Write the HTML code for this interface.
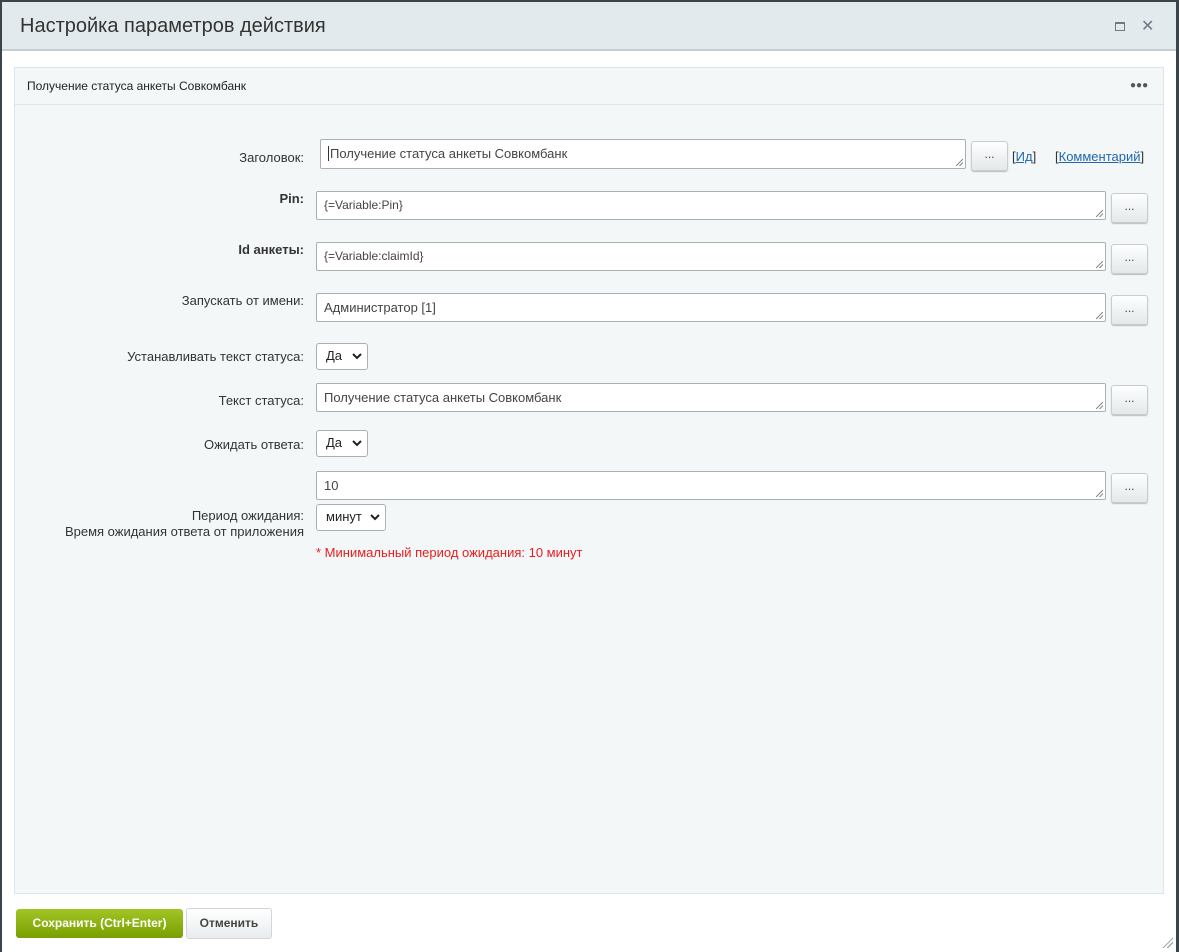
<!DOCTYPE html>
<html><head><meta charset="utf-8"><style>
*{box-sizing:border-box;margin:0;padding:0}
body{width:1179px;height:952px;background:#3b434b;font-family:"Segoe UI","Liberation Sans","Noto Sans CJK SC",sans-serif;color:#333;position:relative;overflow:hidden;font-size:13px}
.dlg{position:absolute;left:2px;top:2px;width:1174px;height:950px;background:#fff}
.hdr{position:absolute;left:0;top:0;width:1174px;height:49px;background:#e3eaed;border-bottom:2px solid #c6cdd2}
.hdr .t{position:absolute;left:18px;top:13px;font-size:20px;color:#333}
.a{position:absolute}
.panel{position:absolute;left:12px;top:65px;width:1150px;height:827px;background:#f4f7f8;border:1px solid #dbe5ea}
.ph{position:absolute;left:0;top:0;width:1148px;height:37px;border-bottom:1px solid #dbe5ea;font-size:12px;color:#222;padding:11px 0 0 12px}
.lbl{position:absolute;right:872px;text-align:right;white-space:nowrap;color:#333}
.inp{position:absolute;background:#fff;border:1px solid #a9b0b5;border-radius:2px;padding:6px 7px;color:#444;white-space:nowrap}
.inp:after{content:"";position:absolute;right:2px;bottom:2px;width:7px;height:7px;background:linear-gradient(135deg,transparent 45%,#888 45%,#888 55%,transparent 55%,transparent 70%,#888 70%,#888 80%,transparent 80%)}
.btn{position:absolute;width:37px;height:30px;border:1px solid #c8cdd0;border-radius:3px;background:linear-gradient(#fff,#e3e8ea);text-align:center;font-size:12px;line-height:24px;color:#444;box-shadow:0 1px 1px #bbb}
.sel{position:absolute;background:#fff;border:1px solid #a9b0b5;border-radius:3px;padding:4px 0 0 9px;color:#222}
.sel svg{position:absolute;right:5px;top:9px}
a{color:#2067b0}
</style></head><body>
<div class="dlg">
<div class="hdr"><div class="t">Настройка параметров действия</div>
<div class="a" style="left:1113px;top:20px;width:10px;height:9px;border:1px solid #6d7a86;border-top-width:2px"></div>
<div class="a" style="left:1139px;top:14px;font-size:16px;color:#6d7a86">✕</div>
</div>
<div class="panel">
<div class="ph">Получение статуса анкеты Совкомбанк</div>
<div class="a" style="left:1115px;top:16px;font-size:10px;color:#555;letter-spacing:0;line-height:4px">●●●</div>
</div>
<div class="lbl" style="top:148px">Заголовок:</div>
<div class="inp" style="left:318px;top:137px;width:646px;height:30px;font-size:13px"><span style="border-left:1px solid #333;padding-left:1px">Получение статуса анкеты Совкомбанк</span></div>
<div class="btn" style="left:969px;top:139px">...</div>
<div class="a" style="left:1010px;top:147px">[<a href="#">Ид</a>]</div>
<div class="a" style="left:1053px;top:147px">[<a href="#">Комментарий</a>]</div>

<div class="lbl" style="top:189px;font-weight:bold;font-size:13px">Pin:</div>
<div class="inp" style="left:314px;top:189px;width:790px;height:29px;font-size:12px">{=Variable:Pin}</div>
<div class="btn" style="left:1109px;top:191px">...</div>

<div class="lbl" style="top:240px;font-weight:bold;font-size:13px">Id анкеты:</div>
<div class="inp" style="left:314px;top:240px;width:790px;height:29px;font-size:12px">{=Variable:claimId}</div>
<div class="btn" style="left:1109px;top:242px">...</div>

<div class="lbl" style="top:291px">Запускать от имени:</div>
<div class="inp" style="left:314px;top:291px;width:790px;height:29px">Администратор [1]</div>
<div class="btn" style="left:1109px;top:293px">...</div>

<div class="lbl" style="top:347px">Устанавливать текст статуса:</div>
<div class="sel" style="left:314px;top:341px;width:52px;height:27px">Да<svg width="10" height="7"><path d="M1 1L5 5L9 1" stroke="#222" stroke-width="2" fill="none"/></svg></div>

<div class="lbl" style="top:391px">Текст статуса:</div>
<div class="inp" style="left:314px;top:381px;width:790px;height:29px">Получение статуса анкеты Совкомбанк</div>
<div class="btn" style="left:1109px;top:383px">...</div>

<div class="lbl" style="top:435px">Ожидать ответа:</div>
<div class="sel" style="left:314px;top:428px;width:52px;height:27px">Да<svg width="10" height="7"><path d="M1 1L5 5L9 1" stroke="#222" stroke-width="2" fill="none"/></svg></div>

<div class="inp" style="left:314px;top:469px;width:790px;height:29px">10</div>
<div class="btn" style="left:1109px;top:471px">...</div>
<div class="lbl" style="top:506px;line-height:16px">Период ожидания:<br>Время ожидания ответа от приложения</div>
<div class="sel" style="left:314px;top:502px;width:70px;height:27px">минут<svg width="10" height="7"><path d="M1 1L5 5L9 1" stroke="#222" stroke-width="2" fill="none"/></svg></div>
<div class="a" style="left:314px;top:543px;color:#e81e1e">* Минимальный период ожидания: 10 минут</div>

<div class="a" style="left:14px;top:907px;width:167px;height:29px;border-radius:3px;background:linear-gradient(#a3c526,#789f00);color:#fff;font-weight:bold;font-size:12px;text-align:center;line-height:29px">Сохранить (Ctrl+Enter)</div>
<div class="a" style="left:184px;top:906px;width:86px;height:31px;border-radius:3px;border:1px solid #d0d6d9;background:linear-gradient(#fff,#e8ecee);color:#444;font-weight:bold;font-size:12px;text-align:center;line-height:29px">Отменить</div>
<div class="a" style="left:1160px;top:935px;width:11px;height:11px;background:linear-gradient(135deg,transparent 50%,#aaa 50%,#aaa 58%,transparent 58%,transparent 70%,#aaa 70%,#aaa 78%,transparent 78%)"></div>
</div>
</body></html>
